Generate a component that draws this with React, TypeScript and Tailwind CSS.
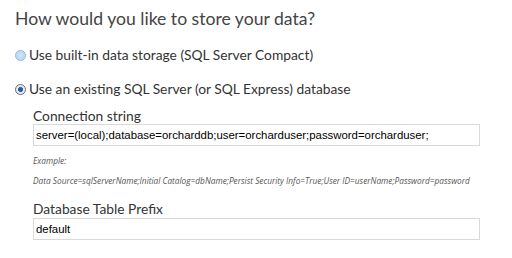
import React, { useState } from 'react';

const Radio = ({ checked }: { checked: boolean }) => (
  <span
    className={`inline-block w-[11px] h-[11px] rounded-full border shrink-0 ${
      checked ? 'border-[#6b6b6b] bg-[radial-gradient(circle,#1f4f8f_0%,#2b6cb8_35%,#e8e8e8_45%,#f4f4f4_100%)]' : 'border-[#8fb7dd] bg-[radial-gradient(circle,#d5e8f8_0%,#b9d8f3_60%,#e7f2fb_100%)]'
    }`}
  />
);

export default function App() {
  const [mode, setMode] = useState<'builtin' | 'existing'>('existing');
  const [conn, setConn] = useState('server=(local);database=orcharddb;user=orcharduser;password=orcharduser;');
  const [prefix, setPrefix] = useState('default');

  return (
    <div className="w-[512px] h-[258px] bg-white text-[#333] font-['Lato',sans-serif] px-[15px] pt-[9px] overflow-hidden">
      <h2 className="text-[17.6px] leading-[20px] text-[#444]">How would you like to store your data?</h2>

      <label className="flex items-center gap-[3px] mt-[16px] text-[13.8px] leading-[20px] cursor-pointer" onClick={() => setMode('builtin')}>
        <Radio checked={mode === 'builtin'} />
        <span>Use built-in data storage (SQL Server Compact)</span>
      </label>

      <label className="flex items-center gap-[3px] mt-[14px] text-[13.8px] leading-[20px] cursor-pointer" onClick={() => setMode('existing')}>
        <Radio checked={mode === 'existing'} />
        <span>Use an existing SQL Server (or SQL Express) database</span>
      </label>

      <div className="pl-[18px] mt-[8px]">
        <div className="text-[13.8px] leading-[18px]">Connection string</div>
        <input
          className="block w-[447px] h-[22px] -mt-px border border-[#d9d9d9] px-[2px] text-[11.4px] text-black font-['Liberation_Sans',sans-serif] outline-none"
          value={conn}
          onChange={(e) => setConn(e.target.value)}
        />
        <div className="mt-[10px] text-[8.3px] italic text-[#555] leading-[10px] font-['Open_Sans',sans-serif]">Example:</div>
        <div className="mt-[10px] text-[8.3px] italic text-[#555] leading-[10px] font-['Open_Sans',sans-serif]">
          Data Source=sqlServerName;Initial Catalog=dbName;Persist Security Info=True;User ID=userName;Password=password
        </div>

        <div className="mt-[14px] text-[13.8px] leading-[18px]">Database Table Prefix</div>
        <input
          className="block w-[447px] h-[22px] border border-[#d9d9d9] px-[2px] text-[11.4px] text-black font-['Liberation_Sans',sans-serif] outline-none"
          value={prefix}
          onChange={(e) => setPrefix(e.target.value)}
        />
      </div>
    </div>
  );
}
